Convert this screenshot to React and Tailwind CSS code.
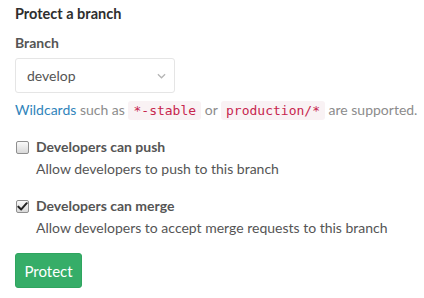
import React from 'react';

const Check = ({ checked }) => (
  <span className="w-[13px] h-[13px] shrink-0 rounded-[2px] border border-[#8f8f8f] bg-gradient-to-b from-[#fafafa] to-[#d9d9d9] flex items-center justify-center">
    {checked && (
      <svg viewBox="0 0 12 12" className="w-[11px] h-[11px]">
        <path d="M1.5 6.2 L4.6 9.2 L10.6 2.4" fill="none" stroke="#222" strokeWidth="2.2" strokeLinecap="round" strokeLinejoin="round" />
      </svg>
    )}
  </span>
);

export default function App() {
  const options = [
    { id: 'push', label: 'Developers can push', help: 'Allow developers to push to this branch', checked: false },
    { id: 'merge', label: 'Developers can merge', help: 'Allow developers to accept merge requests to this branch', checked: true },
  ];

  return (
    <div className="min-h-screen bg-white px-[15px] pt-[4px] text-[14px] leading-[20px] text-[#555]" style={{ fontFamily: 'Lato, "Open Sans", sans-serif' }}>
      <h4 className="font-bold text-[14.5px] text-[#2e2e2e]">Protect a branch</h4>

      <div className="mt-[9px] font-bold text-[#555]">Branch</div>
      <div className="mt-[5px] w-[160px] h-[35px] border border-[#e5e5e5] rounded-[3px] flex items-center justify-between pl-[11px] pr-[8px]">
        <span className="text-[#555]">develop</span>
        <svg viewBox="0 0 10 6" className="w-[9px] h-[6px]">
          <path d="M1 1 L5 5 L9 1" fill="none" stroke="#b5b5b5" strokeWidth="1.4" />
        </svg>
      </div>

      <p className="mt-[7px] text-[#8c8c8c] whitespace-nowrap">
        <a className="text-[#3084bb]">Wildcards</a> such as{' '}
        <code className="bg-[#f9f2f4] text-[#c7254e] rounded-[3px] px-[5px] py-[2px] text-[13px]" style={{ fontFamily: '"DejaVu Sans Mono", monospace' }}>*-stable</code>
        {' '}or{' '}
        <code className="bg-[#f9f2f4] text-[#c7254e] rounded-[3px] px-[5px] py-[2px] text-[13px]" style={{ fontFamily: '"DejaVu Sans Mono", monospace' }}>production/*</code>
        {' '}are supported.
      </p>

      {options.map((o, i) => (
        <div key={o.id} className={i === 0 ? 'mt-[16px]' : 'mt-[17px]'}>
          <label className="flex items-center gap-[7px] pl-px font-bold text-[#555]">
            <Check checked={o.checked} />
            {o.label}
          </label>
          <div className="mt-[2px] pl-[21px] text-[#555]">{o.help}</div>
        </div>
      ))}

      <button className="mt-[15px] w-[67px] h-[35px] rounded-[3px] bg-[#36ad68] border border-[#2fa55f] text-white text-[15px]">
        Protect
      </button>
    </div>
  );
}
